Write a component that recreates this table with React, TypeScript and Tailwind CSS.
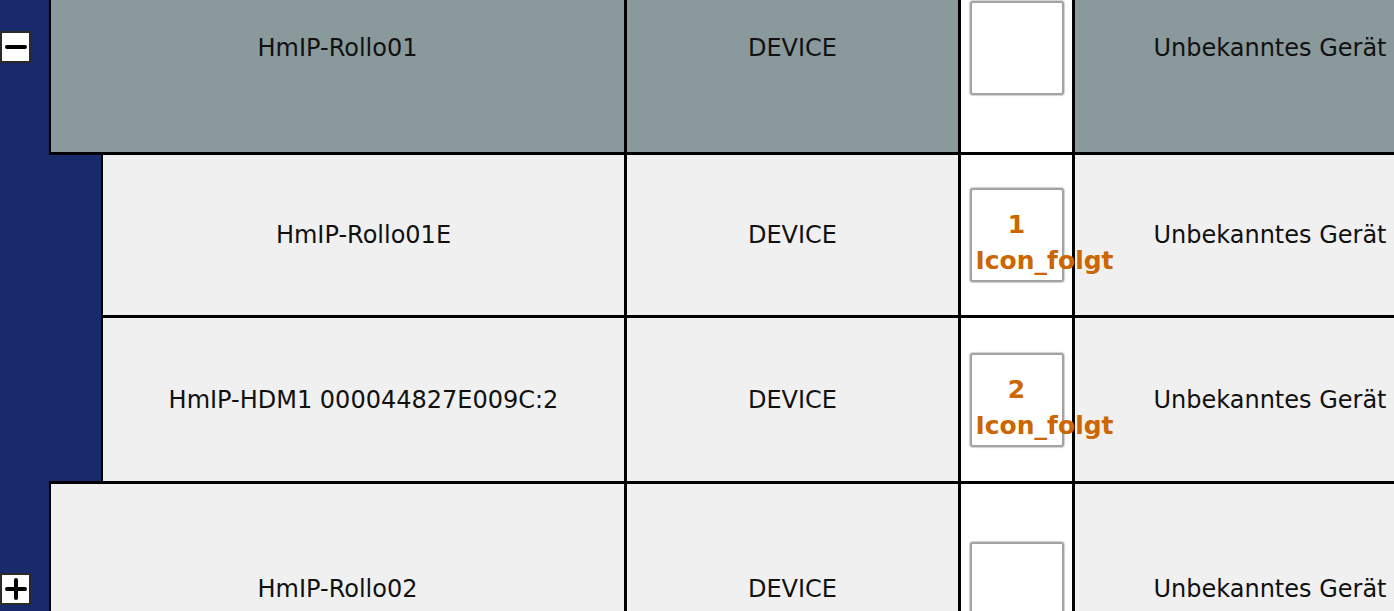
import type { ReactNode } from 'react';

type ToggleKind = 'minus' | 'plus';

const Toggle = ({ kind }: { kind: ToggleKind }) => (
  <div className="flex h-[32px] w-[31px] items-center justify-center border-2 border-[#2a2a2a] bg-white">
    <svg width="22" height="22" viewBox="0 0 22 22">
      <line x1="2" y1="11" x2="20" y2="11" stroke="#000" strokeWidth="4" strokeLinecap="round" />
      {kind === 'plus' && (
        <line x1="11" y1="2" x2="11" y2="20" stroke="#000" strokeWidth="4" strokeLinecap="round" />
      )}
    </svg>
  </div>
);

const IconBox = ({ index }: { index?: number }) => (
  <div className="h-[94px] w-[94px] shrink-0 rounded-[3px] border-2 border-[#a3a3a3] bg-white p-[4px] pt-[17px] text-center text-[25px] leading-[36px] font-bold text-[#cc6600] shadow-[0_0_1px_1px_#d0d0d0]">
    {index !== undefined && (
      <>
        <div>{index}</div>
        <div className="whitespace-nowrap">Icon_folgt</div>
      </>
    )}
  </div>
);

interface RowProps {
  gutter: string;
  toggle?: ToggleKind;
  name: string;
  index?: number;
  rowClass: string;
  contentClass: string;
  gutterClass: string;
  nameWidth: string;
  strip?: boolean;
}

const Cell = ({ className, children }: { className: string; children: ReactNode }) => (
  <div className={`flex shrink-0 border-r-[3px] border-black ${className}`}>{children}</div>
);

const Row = ({ gutter, toggle, name, index, rowClass, contentClass, gutterClass, nameWidth, strip }: RowProps) => (
  <div className={`flex shrink-0 ${rowClass}`}>
    <div className={`flex shrink-0 ${gutter} ${gutterClass}`}>
      {toggle && <Toggle kind={toggle} />}
      {strip && <div className="ml-[49px] h-[3px] bg-black" />}
    </div>
    <div className={`flex border-black bg-[#f0f0f0] ${contentClass}`}>
      <Cell className={`${nameWidth} items-center justify-center`}>{name}</Cell>
      <Cell className="w-[334px] items-center justify-center">DEVICE</Cell>
      <Cell className="w-[114px] items-center justify-center bg-white">
        <IconBox index={index} />
      </Cell>
      <div className="flex w-[390px] shrink-0 items-center justify-center">Unbekanntes Gerät</div>
    </div>
  </div>
);

export default function App() {
  return (
    <div className="flex h-[611px] w-[1394px] flex-col overflow-hidden bg-[#182a6b] text-[24px] text-[#111] font-['DejaVu_Sans',Verdana,sans-serif]">
      <div className="flex h-[155px] shrink-0">
        <div className="w-[49px] shrink-0 pt-[31px]">
          <Toggle kind="minus" />
        </div>
        <div className="flex h-[155px] items-start border-b-[3px] border-l-2 border-black bg-[#8a999c]">
          <Cell className="h-[152px] w-[576px] items-start justify-center">
            <div className="flex h-[95px] items-center">HmIP-Rollo01</div>
          </Cell>
          <Cell className="h-[152px] w-[334px] items-start justify-center">
            <div className="flex h-[95px] items-center">DEVICE</div>
          </Cell>
          <Cell className="h-[152px] w-[114px] items-start justify-center bg-white pt-px">
            <IconBox />
          </Cell>
          <div className="flex h-[95px] w-[390px] shrink-0 items-center justify-center">Unbekanntes Gerät</div>
        </div>
      </div>
      <Row
        gutter="w-[101px]"
        gutterClass=""
        name="HmIP-Rollo01E"
        index={1}
        rowClass="h-[163px]"
        contentClass="border-l-2 border-b-[3px]"
        nameWidth="w-[524px]"
      />
      <Row
        gutter="w-[101px]"
        gutterClass="flex-col justify-end"
        name="HmIP-HDM1 000044827E009C:2"
        index={2}
        rowClass="h-[166px]"
        contentClass="border-l-2 border-b-[3px]"
        nameWidth="w-[524px]"
        strip
      />
      <Row
        gutter="w-[49px]"
        gutterClass="items-center"
        toggle="plus"
        name="HmIP-Rollo02"
        rowClass="h-[210px]"
        contentClass="border-l-2"
        nameWidth="w-[576px]"
      />
    </div>
  );
}
